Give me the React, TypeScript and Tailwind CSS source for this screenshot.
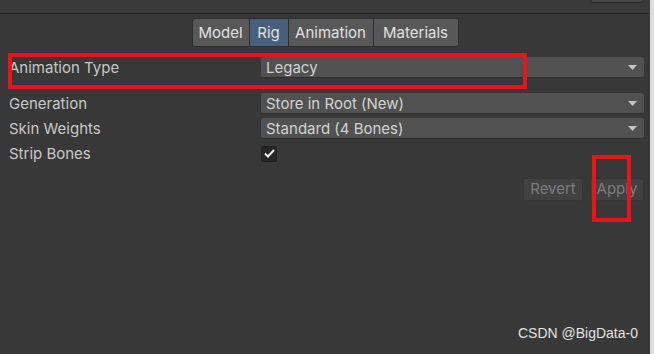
const font = { fontFamily: 'Inter, "Noto Sans", sans-serif' };

function Dropdown({ value }: { value: string }) {
  return (
    <div className="flex-1 h-[21px] flex items-center justify-between pl-[5px] pr-[8px] bg-[#515151] rounded-[3px] border-b border-[#2f2f2f] text-[15px] text-[#d2d2d2] leading-none">
      <span>{value}</span>
      <svg width="9" height="5" viewBox="0 0 9 5" className="mr-[-1px]">
        <path d="M0 0h9L4.5 5z" fill="#c4c4c4" />
      </svg>
    </div>
  );
}

function Row({ label, children, className = '' }: { label: string; children: React.ReactNode; className?: string }) {
  return (
    <div className={`flex items-center h-[21px] ${className}`}>
      <div className="w-[252px] text-[15px] text-[#c8c8c8] leading-none">{label}</div>
      {children}
    </div>
  );
}

export default function App() {
  const tabs = [
    { name: 'Model', w: 'w-[56px]' },
    { name: 'Rig', w: 'w-[39px]' },
    { name: 'Animation', w: 'w-[85px]' },
    { name: 'Materials', w: 'w-[85px]' },
  ];

  return (
    <div className="w-[654px] h-[354px] flex bg-[#383838] overflow-hidden" style={font}>
      <div className="relative w-[650px] flex flex-col">
        {/* top strip */}
        <div className="h-[13px] bg-[#3a3a3a] border-b border-[#232323] flex justify-end items-start pr-[6px] box-content">
          <div className="w-[54px] h-[3px] bg-[#474747] border border-t-0 border-[#2a2a2a] rounded-b-[3px]" />
        </div>

        {/* tabs */}
        <div className="flex justify-center mt-[4px]">
          <div className="flex h-[29px] rounded-[3px] border border-[#2e2e2e] overflow-hidden text-[15px] text-[#e0e0e0]">
            {tabs.map((t, i) => (
              <div
                key={t.name}
                className={`flex items-center justify-center pt-[1px] ${t.w} ${i > 0 ? 'border-l border-[#2e2e2e]' : ''} ${
                  t.name === 'Rig' ? 'bg-[#46607c]' : 'bg-[#585858]'
                }`}
              >
                {t.name}
              </div>
            ))}
          </div>
        </div>

        {/* fields */}
        <div className="pl-[9px] pr-[6px]">
          <Row label="Animation Type" className="mt-[10px]">
            <Dropdown value="Legacy" />
          </Row>
          <Row label="Generation" className="mt-[15px]">
            <Dropdown value="Store in Root (New)" />
          </Row>
          <Row label="Skin Weights" className="mt-[4px]">
            <Dropdown value="Standard (4 Bones)" />
          </Row>
          <Row label="Strip Bones" className="mt-[4px]">
            <div className="w-[16px] h-[16px] rounded-[2px] bg-[#262626] border border-[#1f1f1f] flex items-center justify-center">
              <svg width="11" height="9" viewBox="0 0 11 9">
                <path d="M1 4.5l3 3L10 1" stroke="#f0f0f0" strokeWidth="2" fill="none" />
              </svg>
            </div>
          </Row>

          <div className="flex justify-end gap-[7px] mt-[14px]">
            <div className="w-[60px] h-[23px] rounded-[3px] bg-[#414141] border border-[#353535] flex items-center justify-center text-[15px] text-[#7c7c7c]">
              Revert
            </div>
            <div className="w-[54px] h-[23px] rounded-[3px] bg-[#414141] border border-[#353535] flex items-center justify-center text-[15px] text-[#7c7c7c]">
              Apply
            </div>
          </div>
        </div>

        {/* watermark */}
        <div
          className="mt-auto mb-[10px] pr-[12px] text-right text-[14px] text-[#e2e2e2]"
          style={{ fontFamily: '"Liberation Sans", Arial, sans-serif' }}
        >
          CSDN @BigData-0
        </div>

        {/* annotation boxes */}
        <div className="absolute left-[8px] top-[53px] w-[519px] h-[36px] border-[4px] border-[#e8141c]" />
        <div className="absolute left-[592px] top-[155px] w-[39px] h-[67px] border-[4px] border-[#e8141c]" />
      </div>
      <div className="w-[4px] bg-[#dcdcdc]" />
    </div>
  );
}
